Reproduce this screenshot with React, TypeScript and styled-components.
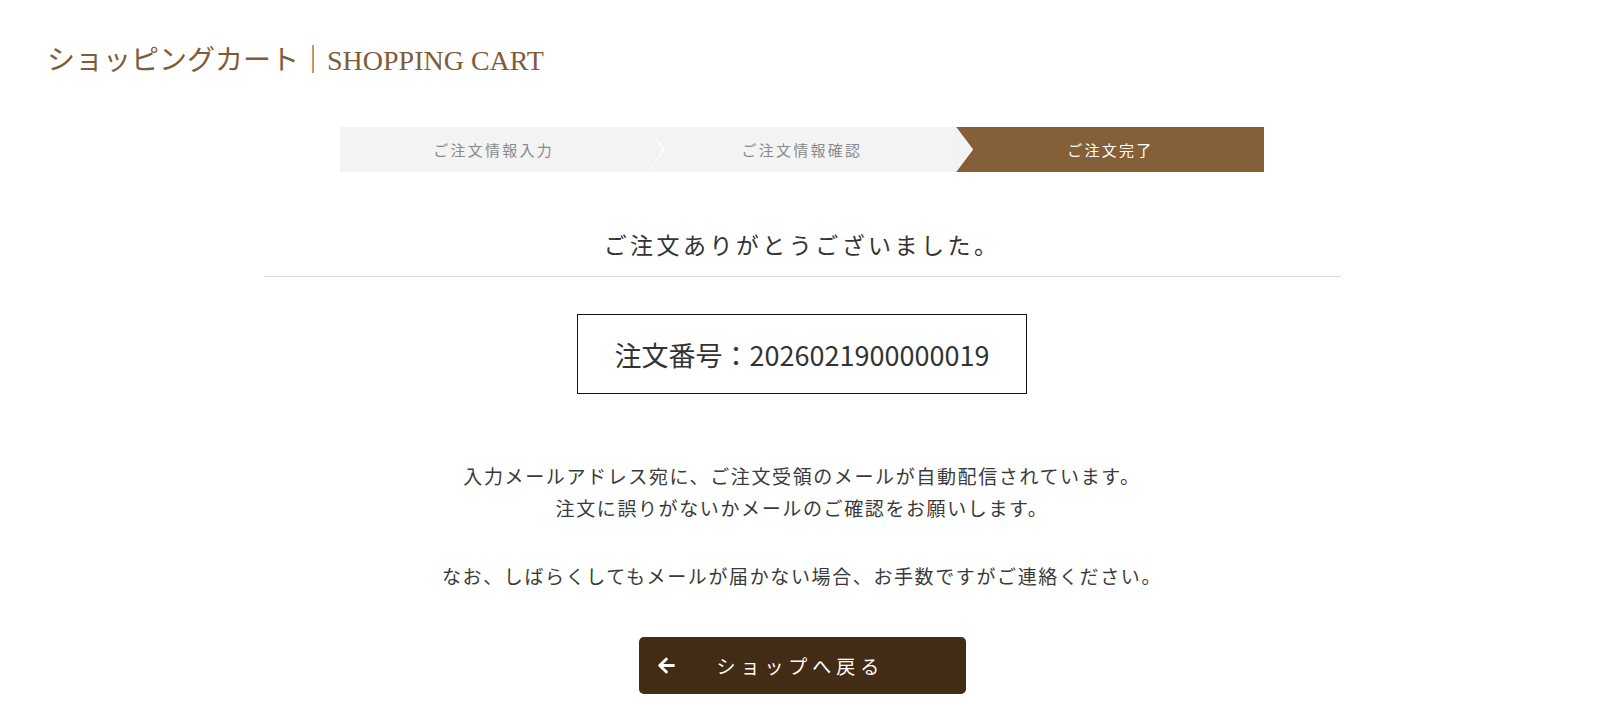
import styled, { createGlobalStyle } from 'styled-components'
import { FaArrowLeft } from 'react-icons/fa'

const GlobalStyle = createGlobalStyle`
  html, body {
    margin: 0;
    padding: 0;
    background: #fff;
  }
  body {
    font-family: "Noto Sans CJK JP", "Noto Sans", sans-serif;
    color: #333;
  }
`

const Page = styled.div`
  width: 100%;
  min-height: 720px;
  padding: 41px 0 0;
  box-sizing: border-box;
`

const PageTitle = styled.h1`
  margin: 0 0 0 47px;
  font-family: "Liberation Serif", "Noto Sans CJK JP", serif;
  font-weight: 400;
  font-size: 28px;
  line-height: 40px;
  color: #7f5c38;
`

const Steps = styled.ol`
  display: flex;
  width: 925px;
  height: 45px;
  margin: 46px auto 0;
  padding: 0;
  list-style: none;
`

const Step = styled.li<{ $active: boolean, $first: boolean, $last: boolean }>`
  position: relative;
  flex: 1;
  display: flex;
  align-items: center;
  justify-content: center;
  font-size: 15px;
  letter-spacing: 0.15em;
  color: ${props => (props.$active ? '#fff' : '#8a8a8a')};
  background: ${props => (props.$active ? '#845f38' : '#f3f3f3')};

  /* notch cut from the left edge */
  &::before {
    content: '';
    display: ${props => (props.$first ? 'none' : 'block')};
    position: absolute;
    top: 0;
    left: 0;
    width: 17px;
    height: 100%;
    background: #fff;
    clip-path: polygon(0 0, 100% 50%, 0 100%);
    z-index: 1;
  }

  /* arrow tip laid over the next step */
  &::after {
    content: '';
    display: ${props => (props.$last ? 'none' : 'block')};
    position: absolute;
    top: 0;
    right: -15px;
    width: 15px;
    height: 100%;
    background: inherit;
    clip-path: polygon(0 0, 100% 50%, 0 100%);
    z-index: 2;
  }
`

const Content = styled.main`
  width: 1077px;
  margin: 0 auto;
  display: flex;
  flex-direction: column;
  align-items: center;
`

const Heading = styled.h2`
  align-self: stretch;
  margin: 55px 0 0;
  padding-bottom: 15px;
  border-bottom: 1px solid #d9d9d9;
  font-size: 23px;
  font-weight: 400;
  line-height: 34px;
  letter-spacing: 0.15em;
  text-align: center;
  color: #333;
`

const OrderBox = styled.div`
  display: flex;
  align-items: center;
  justify-content: center;
  width: 450px;
  height: 80px;
  margin-top: 37px;
  box-sizing: border-box;
  border: 1.5px solid #111;
  font-size: 27px;
  color: #333;
`

const Message = styled.p`
  margin: 0;
  font-size: 19px;
  line-height: 32px;
  letter-spacing: 0.085em;
  text-align: center;
  color: #3a3a3a;

  &:first-of-type {
    margin-top: 66px;
  }

  & + & {
    margin-top: 36px;
  }
`

const BackButton = styled.a`
  display: flex;
  align-items: center;
  gap: 41px;
  width: 327px;
  height: 57px;
  margin-top: 45px;
  padding: 0 18px;
  box-sizing: border-box;
  border-radius: 5px;
  background: #432c15;
  color: #fff;
  font-size: 19px;
  letter-spacing: 0.26em;
  text-decoration: none;
  cursor: pointer;

  svg {
    flex: none;
    width: 19px;
    height: 19px;
  }
`

const steps = ['ご注文情報入力', 'ご注文情報確認', 'ご注文完了']

export default function App() {
  return (
    <Page>
      <GlobalStyle />
      <PageTitle>ショッピングカート｜SHOPPING CART</PageTitle>
      <Steps>
        {steps.map((label, i) => (
          <Step
            key={label}
            $active={i === steps.length - 1}
            $first={i === 0}
            $last={i === steps.length - 1}
          >
            {label}
          </Step>
        ))}
      </Steps>
      <Content>
        <Heading>ご注文ありがとうございました。</Heading>
        <OrderBox>注文番号：2026021900000019</OrderBox>
        <Message>
          入力メールアドレス宛に、ご注文受領のメールが自動配信されています。
          <br />
          注文に誤りがないかメールのご確認をお願いします。
        </Message>
        <Message>なお、しばらくしてもメールが届かない場合、お手数ですがご連絡ください。</Message>
        <BackButton>
          <FaArrowLeft />
          <span>ショップへ戻る</span>
        </BackButton>
      </Content>
    </Page>
  )
}
